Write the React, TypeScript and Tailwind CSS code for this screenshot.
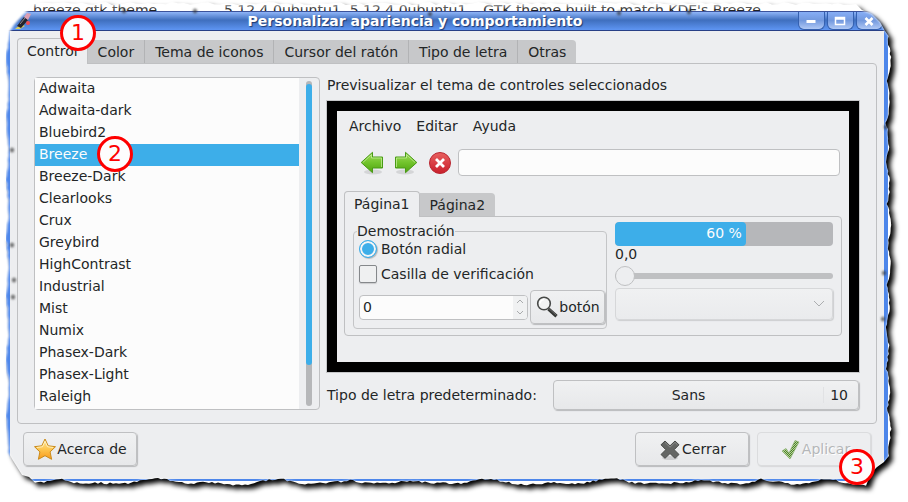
import React from "react";

const themes = [
  "Adwaita", "Adwaita-dark", "Bluebird2", "Breeze", "Breeze-Dark", "Clearlooks", "Crux", "Greybird",
  "HighContrast", "Industrial", "Mist", "Numix", "Phasex-Dark", "Phasex-Light", "Raleigh",
];
const tabs = ["Color", "Tema de iconos", "Cursor del ratón", "Tipo de letra", "Otras"];

const raised = "border border-[#bfc0c2] bg-linear-to-b from-[#f0f1f2] to-[#e7e8ea] shadow-[1px_1px_1px_#b9babc]";

function Step({ n, className }: { n: number; className: string }) {
  return (
    <span className={`absolute z-20 flex size-9 items-center justify-center rounded-full border-3 border-[#fe0000] bg-[#fdfdfd] text-[22px] leading-none text-[#fe0000] ${className}`}>
      {n}
    </span>
  );
}

function Arrow({ flip = false }: { flip?: boolean }) {
  return (
    <svg viewBox="0 0 24 26" className={flip ? "h-[26px] w-6 -scale-x-100" : "h-[26px] w-6"} aria-hidden="true">
      <defs>
        <linearGradient id="leaf" x1="0" y1="0" x2="0" y2="1">
          <stop offset="0" stopColor="#a3dc5c" />
          <stop offset=".5" stopColor="#72c42c" />
          <stop offset="1" stopColor="#4fa30f" />
        </linearGradient>
      </defs>
      <ellipse cx="13" cy="22" rx="9" ry="2.5" fill="#000" opacity=".1" />
      <path d="M1.2 12.5 12.5 2.300V7H22.5V18H12.5V22.700Z" fill="url(#leaf)" stroke="#499a16" strokeLinejoin="round" />
      <path d="M2.9 12.5 11.5 4.6V8H21.5V17" fill="none" stroke="#c9efa0" opacity=".7" />
    </svg>
  );
}

function StopIcon() {
  return (
    <svg viewBox="0 0 24 26" className="h-[26px] w-6" aria-hidden="true">
      <defs>
        <linearGradient id="stopRed" x1="0" y1="0" x2="0" y2="1">
          <stop offset="0" stopColor="#e8605f" />
          <stop offset="1" stopColor="#c91f2b" />
        </linearGradient>
      </defs>
      <circle cx="12" cy="13" r="10.5" fill="url(#stopRed)" stroke="#b92631" />
      <path d="m8 9 8 8M16 9l-8 8" stroke="#fff" strokeWidth="2.8" />
    </svg>
  );
}

function StarIcon() {
  return (
    <svg viewBox="0 0 24 24" className="size-6" aria-hidden="true">
      <defs>
        <linearGradient id="gold" x1="0" y1="0" x2="0" y2="1">
          <stop offset="0" stopColor="#ffe9a0" />
          <stop offset=".5" stopColor="#fdc650" />
          <stop offset="1" stopColor="#f89a1c" />
        </linearGradient>
      </defs>
      <path d="m12 2 3.200 6.800 7.300.9-5.400 5.200 1.500 7.400-6.600-3.600-6.600 3.600 1.500-7.400L1.500 9.700l7.300-.9Z" fill="url(#gold)" stroke="#c98a1b" strokeLinejoin="round" />
      <path d="m12 4.300 2.500 5.400 5.600.8M3.900 10.500l5.600-.8L12 4.300" fill="none" stroke="#fff6d0" opacity=".8" />
    </svg>
  );
}

function CrossIcon() {
  return (
    <svg viewBox="0 0 24 24" className="size-6" aria-hidden="true">
      <ellipse cx="12" cy="21" rx="8" ry="2" fill="#000" opacity=".12" />
      <path d="m7 4 5 4.800L17 4l4 3.800-4.800 4.900 4.800 4.800-4 3.800-5-4.800-5 4.800-4-3.800 4.800-4.800L3 7.800Z" fill="#646664" stroke="#4a4c4a" strokeLinejoin="round" />
      <path d="m7 5.400 5 4.800 5-4.800 2.500 2.400" fill="none" stroke="#8c8e8c" />
    </svg>
  );
}

function CheckIcon() {
  return (
    <svg viewBox="0 0 24 24" className="size-6" aria-hidden="true">
      <defs>
        <pattern id="dither" width="2" height="2" patternUnits="userSpaceOnUse">
          <rect width="2" height="2" fill="#b4d596" />
          <rect width="1" height="1" fill="#507f2e" />
          <rect x="1" y="1" width="1" height="1" fill="#507f2e" />
        </pattern>
      </defs>
      <path d="m4 14 4-2.500 3 4.500L17 3.500l4 1.500L12 22Z" fill="url(#dither)" stroke="#8db274" strokeWidth=".7" />
    </svg>
  );
}

function SearchIcon() {
  return (
    <svg viewBox="0 0 24 24" className="size-6" aria-hidden="true">
      <path d="m13.500 14 8 7.300" stroke="#333533" strokeWidth="3.400" />
      <path d="m13.500 13.200 8 7.300" stroke="#777" strokeWidth=".8" />
      <circle cx="9" cy="8.500" r="6.300" fill="#f2f3f3" stroke="#474947" strokeWidth="1.600" />
      <path d="M5 8.500a4 4 0 0 1 4-4" fill="none" stroke="#fff" strokeWidth="1.500" />
    </svg>
  );
}

function BrushIcon() {
  return (
    <svg viewBox="0 0 18 18" className="size-[18px]" aria-hidden="true">
      <path d="m1 17 6-5 4 2-5 3Z" fill="#d8cf62" />
      <path d="m3 14 7-9 4 3-7 8Z" fill="#24232b" />
      <path d="m6 12 5-6" stroke="#8c8b95" />
      <path d="m10 5 3-4 4 1-3 6Z" fill="#dd9db1" />
      <circle cx="14" cy="11" r="2" fill="#f04b51" />
    </svg>
  );
}

/* Ragged outline of the paper: jitter is repeatable so the edge is the same on every render. */
function tornOutline(): string {
  const noise = (i: number) => {
    const v = Math.sin(i * 127.1 + 11.7) * 43758.5453;
    return v - Math.floor(v);
  };
  const p: string[] = [];
  for (let x = 34; x < 862; x += 6) p.push(`${x} ${2 + noise(x) * 3}`);
  p.push("862 10", "872 14", "880 22", "885 31");
  for (let y = 36; y < 458; y += 3) {
    const wave = Math.abs(Math.sin(y / 13)) * 3 + Math.sin(y / 31);
    p.push(`${886 + wave + noise(y) * 1.5} ${y}`);
  }
  p.push("884 462", "877 467", "871 473");
  for (let x = 866; x > 34; x -= 3) {
    const wave = Math.abs(Math.sin(x / 27 + Math.sin(x / 60))) * 5 + Math.sin(x / 9);
    p.push(`${x} ${478 + wave + noise(x + 5) * 2}`);
  }
  p.push("29 477", "22 475", "17 467", "12 459");
  for (let y = 452; y > 36; y -= 4) {
    p.push(`${5 + Math.abs(Math.sin(y / 19)) * 3 + noise(y + 9) * 1.5} ${y}`);
  }
  p.push("10 31", "14 25", "22 16", "28 10");
  return `M${p.join("L")}Z`;
}

function TornEdge() {
  const outline = tornOutline();
  const outside = `M-20-20H928V522H-20Z${outline}`;
  const flecks = [[12, 150], [12, 245], [14, 280], [13, 297], [886, 127], [884, 273], [883, 319], [124, 11], [195, 11], [430, 14], [619, 13], [689, 12]];
  return (
    <svg viewBox="0 0 908 502" preserveAspectRatio="none" className="pointer-events-none absolute inset-0 z-10 size-full" aria-hidden="true">
      <defs>
        <clipPath id="outsidePaper"><path d={outside} clipRule="evenodd" /></clipPath>
        <filter id="soft" x="-5%" y="-5%" width="110%" height="110%"><feGaussianBlur stdDeviation="2.600" /></filter>
        <filter id="edge" x="-5%" y="-5%" width="110%" height="110%"><feGaussianBlur stdDeviation=".9" /></filter>
        <linearGradient id="topFade" x1="0" y1="0" x2="0" y2="1">
          <stop offset="0" stopColor="#fff" />
          <stop offset="1" stopColor="#fff" stopOpacity="0" />
        </linearGradient>
      </defs>
      <path d={outside} fillRule="evenodd" fill="#fff" filter="url(#edge)" />
      <rect width="908" height="10" fill="url(#topFade)" />
      <g clipPath="url(#outsidePaper)" filter="url(#hair)">
        <path d={outline} transform="translate(4 4)" fill="#000" filter="url(#soft)" />
      </g>
      <g fill="#333" opacity=".65" filter="url(#edge)">
        {flecks.map(([x, y]) => <ellipse key={`${x}-${y}`} cx={x} cy={y} rx="2.200" ry="2.600" />)}
      </g>
      <filter id="hair" x="-5%" y="-5%" width="110%" height="110%"><feGaussianBlur stdDeviation=".6" /></filter>
    </svg>
  );
}

function TitleButton({ label, children }: { label: string; children: React.ReactNode }) {
  return (
    <button aria-label={label} className="flex h-[18px] w-[27px] items-center justify-center rounded-b-md border border-t-0 border-[#3561b0] bg-linear-to-b from-[#86aef6] via-[#7399de] to-[#b0c8f5]">
      <svg viewBox="0 0 12 10" className="h-2.5 w-3" fill="none" stroke="#fff" aria-hidden="true">{children}</svg>
    </button>
  );
}

function TitleBar() {
  return (
    <header className="relative flex h-5 items-center justify-between rounded-t-lg border-y border-t-[#3c539b] border-b-[#273f86] bg-linear-to-b from-[#8fb5f8] via-[#3f6fbe] via-45% to-[#5e95f3] pl-2">
      <BrushIcon />
      <h1 className="text-[14px] leading-4 font-bold text-white [text-shadow:1px_1px_1px_#1c3870]">Personalizar apariencia y comportamiento</h1>
      <div className="flex gap-0.5 pr-[5px]">
        <TitleButton label="Minimizar"><path d="M1.500 5.500h9" strokeWidth="3" /></TitleButton>
        <TitleButton label="Maximizar"><path d="M1.500 1.500h9v7h-9zM1.500 3h9" strokeWidth="1.500" /></TitleButton>
        <TitleButton label="Cerrar ventana"><path d="m2.500 2 7 7M9.500 2l-7 7" strokeWidth="2.600" /></TitleButton>
      </div>
    </header>
  );
}

function ThemeList() {
  return (
    <div className="flex w-[286px] shrink-0 rounded-sm border border-[#bfc0c2]">
      <ul role="listbox" aria-label="Tema de controles" className="min-w-0 flex-1 bg-[#fcfcfc] pb-px">
        {themes.map((name) => (
          <li key={name} role="option" aria-selected={name === "Breeze"} className={name === "Breeze" ? "relative h-[22px] bg-[#3daee9] px-1 leading-5 text-[#fcfcfc]" : "h-[22px] px-1 leading-5"}>
            {name}
            {name === "Breeze" && <Step n={2} className="-top-[8px] left-[62px]" />}
          </li>
        ))}
      </ul>
      <div className="flex w-5 justify-center py-[3px]">
        <div className="w-1.5 rounded-full bg-[#b6b7b9] pt-[3px]">
          <div className="h-[281px] rounded-full bg-[#3daee9]" />
        </div>
      </div>
    </div>
  );
}

function DemoFrame() {
  return (
    <fieldset className="w-[254px] shrink-0 rounded-sm border border-[#c4c5c7] pr-px pb-1 pl-[5px]">
      <legend className="-ml-0.5 h-4 leading-4">Demostración</legend>
      <label className="flex h-5 items-center gap-1">
        <input type="radio" name="demo" defaultChecked className="size-[18px] appearance-none rounded-full border border-[#3daee9] bg-[#3daee9] shadow-[inset_0_0_0_2px_#f4f5f6,1px_1px_1px_#b9babc]" />
        Botón radial
      </label>
      <label className="mt-[5px] flex h-5 items-center gap-1">
        <input type="checkbox" className="size-[18px] appearance-none rounded-xs border border-[#85888b] bg-[#eff0f1] shadow-[0_1px_1px_#c9cacc]" />
        Casilla de verificación
      </label>
      <div className="mt-1.5 flex items-center gap-0.5">
        <div className="flex h-[25px] min-w-0 flex-1 overflow-hidden rounded-sm border border-[#bfc0c2] bg-[#fcfcfc]">
          <input aria-label="Valor" defaultValue="0" className="w-full min-w-0 px-[3px] outline-none" />
          <div className="flex w-3.5 shrink-0 flex-col justify-between bg-[#f0f1f2] py-[3px] text-[#a9abad]">
            <button aria-label="Aumentar" className="h-1.5"><svg viewBox="0 0 8 5" className="mx-auto w-2" fill="none" stroke="currentColor"><path d="m1 4 3-3 3 3" /></svg></button>
            <button aria-label="Disminuir" className="h-1.5"><svg viewBox="0 0 8 5" className="mx-auto w-2" fill="none" stroke="currentColor"><path d="m1 1 3 3 3-3" /></svg></button>
          </div>
        </div>
        <button className={`flex h-[34px] w-[75px] shrink-0 items-center justify-center rounded-sm ${raised}`}>
          <SearchIcon />botón
        </button>
      </div>
    </fieldset>
  );
}

function ValueColumn() {
  return (
    <div className="flex min-w-0 flex-1 flex-col pt-[5px]">
      <div role="progressbar" aria-label="Progreso" aria-valuenow={60} className="h-6 overflow-hidden rounded-sm bg-[#b6b7ba]">
        <div className="h-full w-3/5 rounded-sm bg-[#3daee9] pr-1 text-right leading-[22px] text-[#fcfcfc]">60 %</div>
      </div>
      <label htmlFor="scale" className="h-5 leading-4">0,0</label>
      <input id="scale" type="range" defaultValue={0} className="h-5 w-full appearance-none bg-transparent [&::-webkit-slider-runnable-track]:h-1.5 [&::-webkit-slider-runnable-track]:rounded-full [&::-webkit-slider-runnable-track]:bg-[#bfc0c2] [&::-webkit-slider-thumb]:-mt-[7px] [&::-webkit-slider-thumb]:size-5 [&::-webkit-slider-thumb]:appearance-none [&::-webkit-slider-thumb]:rounded-full [&::-webkit-slider-thumb]:border [&::-webkit-slider-thumb]:border-[#bfc0c2] [&::-webkit-slider-thumb]:bg-[#edeef0]" />
      <div className="relative mt-0.5">
        <select aria-label="Opciones" disabled className="block h-8 w-full appearance-none rounded-sm border border-[#d6d7d9] bg-linear-to-b from-[#f0f1f2] to-[#eaebed] shadow-[1px_1px_1px_#cdced0]" />
        <svg viewBox="0 0 12 8" className="pointer-events-none absolute top-3 right-2 h-2 w-3" fill="none" stroke="#acaeb0" aria-hidden="true"><path d="m1 1 5 5 5-5" /></svg>
      </div>
    </div>
  );
}

function Preview() {
  return (
    <div className="flex h-[271px] flex-col border-10 border-black px-[7px] pt-[7px] outline outline-[#c6c7c9]">
      <nav className="flex gap-[15px] pl-[5px] leading-4">
        <button>Archivo</button>
        <button>Editar</button>
        <button>Ayuda</button>
      </nav>
      <div className="mt-[15px] flex items-center pr-0.5 pl-4">
        <div className="flex shrink-0 gap-2.5">
          <button aria-label="Atrás"><Arrow /></button>
          <button aria-label="Adelante"><Arrow flip /></button>
          <button aria-label="Detener"><StopIcon /></button>
        </div>
        <input aria-label="Dirección" className="ml-1.5 h-[27px] min-w-0 flex-1 rounded-sm border border-[#bfc0c2] bg-[#fcfcfc] px-1 outline-none" />
      </div>
      <div role="tablist" className="mt-[15px] flex items-end">
        <button role="tab" aria-selected="true" className="relative -mb-px h-[26px] rounded-t-sm border border-b-0 border-[#bfc0c2] bg-[#edeef0] px-[9px]">Página1</button>
        <button role="tab" aria-selected="false" className="h-[23px] rounded-tr-sm bg-[#c7c8ca] px-[10px] pt-0.5">Página2</button>
      </div>
      <div role="tabpanel" className="flex gap-2 rounded-sm rounded-tl-none border border-[#bfc0c2] p-2 pt-0 pb-1.5">
        <div className="pt-1.5"><DemoFrame /></div>
        <ValueColumn />
      </div>
    </div>
  );
}

export default function App() {
  return (
    <div className="relative flex min-h-screen flex-col overflow-hidden bg-white pr-5 pb-[21px] pl-1.5 font-['DejaVu_Sans',sans-serif] text-[14px] text-[#232627]">
      <div className="flex h-[11px] shrink-0 gap-[9px] pl-[27px] leading-5 whitespace-nowrap text-[#222]">
        <p className="w-[182px]">breeze gtk theme</p>
        <p>5.12.4.0ubuntu1</p>
        <p>5.12.4.0ubuntu1</p>
        <p className="pl-2">GTK theme built to match KDE's Breeze</p>
      </div>
      <main className="relative flex flex-1 flex-col">
        <TitleBar />
        <div className="flex flex-1 flex-col border-x-4 border-b-2 border-[#4d86ea] bg-[#edeef0] px-[7px] pt-[7px]">
          <div role="tablist" className="flex items-end">
            <button role="tab" aria-selected="true" className="relative -mb-px h-[26px] rounded-t-sm border border-b-0 border-[#bfc0c2] bg-[#edeef0] px-[9px]">
              Control
              <Step n={1} className="-top-6 left-[42px]" />
            </button>
            {tabs.map((t) => (
              <button key={t} role="tab" aria-selected="false" className="h-[23px] border-r border-[#b2b3b5] bg-[#c7c8ca] px-[10px] pt-px last:rounded-tr-sm last:border-r-0">{t}</button>
            ))}
          </div>
          <section role="tabpanel" className="flex gap-[7px] rounded-sm rounded-tl-none border border-[#bfc0c2] py-[13px] pr-[17px] pl-4">
            <ThemeList />
            <div className="flex min-w-0 flex-1 flex-col">
              <h2 className="mb-2 h-4 leading-4">Previsualizar el tema de controles seleccionados</h2>
              <Preview />
              <div className="mt-2 flex items-center gap-4">
                <span id="fontLabel" className="shrink-0 leading-4">Tipo de letra predeterminado:</span>
                <button aria-labelledby="fontLabel" className={`flex h-[30px] min-w-0 flex-1 items-center rounded-sm leading-4 ${raised}`}>
                  <span className="flex-1">Sans</span>
                  <span className="border-l border-[#e1e2e4] pr-2.5 pl-1.5">10</span>
                </button>
              </div>
            </div>
          </section>
          <footer className="mt-2 flex gap-2 px-1.5">
            <button className={`mr-auto flex h-[34px] w-[114px] items-center justify-center rounded-sm ${raised}`}><StarIcon />Acerca de</button>
            <button className={`flex h-[34px] w-[114px] items-center justify-center rounded-sm ${raised}`}><CrossIcon />Cerrar</button>
            <button disabled className="relative flex h-[34px] w-[114px] items-center justify-center rounded-sm border border-[#dbdcde] bg-[#edeef0] text-[#b5b7b9] shadow-[1px_1px_1px_#d7d8da] [text-shadow:1px_1px_0_#fff]">
              <CheckIcon />Aplicar
              <Step n={3} className="top-4 left-[81px]" />
            </button>
          </footer>
        </div>
      </main>
      <TornEdge />
    </div>
  );
}
